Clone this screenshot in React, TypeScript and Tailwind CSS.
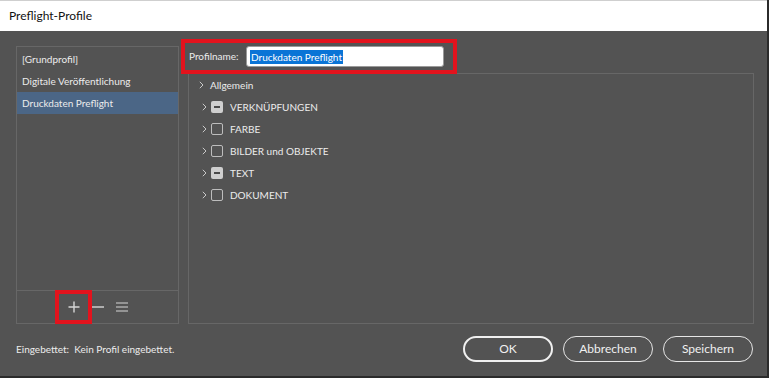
import type { ReactNode } from 'react'

const font = { fontFamily: 'Lato, "Noto Sans", Arial, sans-serif' }

type Check = 'mixed' | 'empty'

const groups: { label: string; check: Check }[] = [
  { label: 'VERKNÜPFUNGEN', check: 'mixed' },
  { label: 'FARBE', check: 'empty' },
  { label: 'BILDER und OBJEKTE', check: 'empty' },
  { label: 'TEXT', check: 'mixed' },
  { label: 'DOKUMENT', check: 'empty' },
]

const profiles = ['[Grundprofil]', 'Digitale Veröffentlichung', 'Druckdaten Preflight']

function Chevron() {
  return (
    <svg width="5" height="8" viewBox="0 0 5 8" className="shrink-0">
      <path d="M0.8 0.8 L4 4 L0.8 7.2" fill="none" stroke="#c9c9c9" strokeWidth="1" />
    </svg>
  )
}

function Box({ check }: { check: Check }) {
  if (check === 'mixed') {
    return (
      <span className="ml-[4px] w-[12px] h-[12px] rounded-[2px] bg-[#cfcfcf] flex items-center justify-center shrink-0">
        <span className="w-[6px] h-[2px] bg-[#4a4a4a]" />
      </span>
    )
  }
  return <span className="ml-[4px] block w-[12px] h-[12px] rounded-[2px] border border-[#bdbdbd] shrink-0" />
}

function Button({ children, strong }: { children: ReactNode; strong?: boolean }) {
  return (
    <button
      className={
        strong
          ? 'w-[90px] h-[26px] rounded-full border-2 border-[#f0f0f0] text-[12px] text-[#f0f0f0]'
          : 'w-[90px] h-[26px] rounded-full border border-[#e6e6e6] text-[12px] text-[#f0f0f0]'
      }
    >
      {children}
    </button>
  )
}

export default function App() {
  return (
    <div
      style={font}
      className="w-[769px] h-[378px] bg-[#535353] flex flex-col border-r-2 border-b-2 border-[#2b2b2b] overflow-hidden"
    >
      <div className="h-[31px] bg-white border-t border-[#cfcfcf] flex items-center pl-[9px] text-[12px] text-[#111] shrink-0">
        Preflight-Profile
      </div>

      <div className="flex mt-[15px] pl-[16px]">
        {/* profile list */}
        <div className="relative w-[163px] h-[278px] border border-[#676767] flex flex-col">
          <div className="flex-1 pt-px">
            {profiles.map((p, i) => (
              <div
                key={p}
                className={
                  i === 2
                    ? 'h-[22px] flex items-center px-[5px] text-[10px] text-[#ececec] bg-[#4b6686]'
                    : 'h-[22px] flex items-center px-[5px] text-[10px] text-[#ececec]'
                }
              >
                {p}
              </div>
            ))}
          </div>
          <div className="h-[33px] border-t border-[#676767] flex items-center pl-[51px] gap-[12px]">
            <svg width="12" height="12" viewBox="0 0 12 12">
              <path d="M6 0.5 V11.5 M0.5 6 H11.5" stroke="#d6d6d6" strokeWidth="1.4" />
            </svg>
            <svg width="12" height="12" viewBox="0 0 12 12">
              <path d="M0 6 H12" stroke="#d6d6d6" strokeWidth="1.4" />
            </svg>
            <svg width="12" height="12" viewBox="0 0 12 12">
              <path d="M0 2 H12 M0 6 H12 M0 10 H12" stroke="#d6d6d6" strokeWidth="1.1" />
            </svg>
          </div>
          {/* highlight around add button */}
          <div className="absolute left-[38px] top-[243px] w-[37px] h-[34px] border-4 border-[#e3131d]" />
        </div>

        {/* right column */}
        <div className="ml-[9px] w-[566px] flex flex-col">
          <div className="relative h-[27px] flex items-start">
            <span className="w-[58px] text-[10px] text-[#ececec] leading-[21px] pl-[1px]">Profilname:</span>
            <div className="w-[198px] h-[21px] bg-white rounded-[3px] border border-[#9a9a9a] flex items-center pl-[3px]">
              <span className="bg-[#0a74d6] text-white text-[10px] leading-[14px] px-px">Druckdaten Preflight</span>
            </div>
            <div className="absolute left-[-7px] top-[-7px] w-[276px] h-[35px] border-4 border-[#e3131d]" />
          </div>
          <div className="h-[251px] border border-[#676767] flex flex-col">
            <div className="h-[22px] flex items-center pl-[10px] gap-[6px] text-[10px] text-[#ececec]">
              <Chevron />
              Allgemein
            </div>
            {groups.map((g) => (
              <div key={g.label} className="h-[22px] flex items-center pl-[13px] text-[10px] text-[#ececec]">
                <Chevron />
                <Box check={g.check} />
                <span className="ml-[7px]">{g.label}</span>
              </div>
            ))}
          </div>
        </div>
      </div>

      <div className="flex items-center mt-[12px] pl-[16px] pr-[14px]">
        <span className="text-[10px] text-[#ececec] whitespace-pre">Eingebettet:  Kein Profil eingebettet.</span>
        <div className="ml-auto flex gap-[10px]">
          <Button strong>OK</Button>
          <Button>Abbrechen</Button>
          <Button>Speichern</Button>
        </div>
      </div>
    </div>
  )
}
